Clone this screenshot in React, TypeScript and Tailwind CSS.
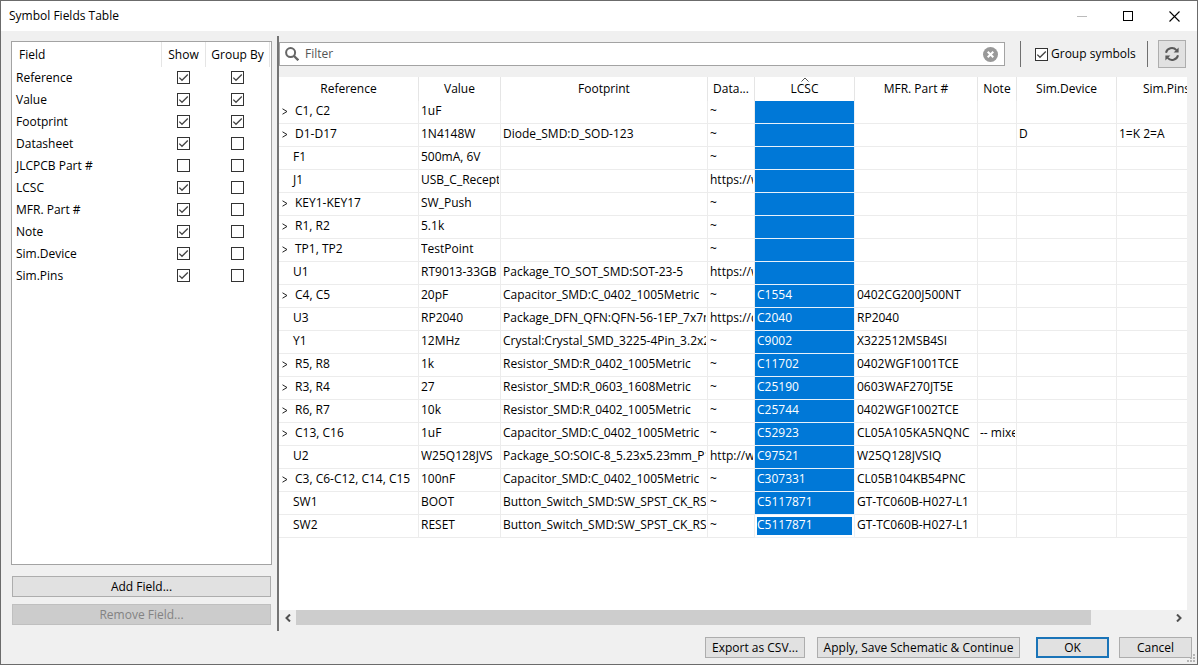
import { useState } from "react";

type Field = { name: string; show: boolean; group: boolean };

const initialFields: Field[] = [
  { name: "Reference", show: true, group: true },
  { name: "Value", show: true, group: true },
  { name: "Footprint", show: true, group: true },
  { name: "Datasheet", show: true, group: false },
  { name: "JLCPCB Part #", show: false, group: false },
  { name: "LCSC", show: true, group: false },
  { name: "MFR. Part #", show: true, group: false },
  { name: "Note", show: true, group: false },
  { name: "Sim.Device", show: true, group: false },
  { name: "Sim.Pins", show: true, group: false },
];

// Reference, Value, Footprint, Datasheet, LCSC, MFR. Part #, Note, Sim.Device, Sim.Pins
const rows: string[][] = [
  ["C1, C2", "1uF", "", "~", "", "", "", "", ""],
  ["D1-D17", "1N4148W", "Diode_SMD:D_SOD-123", "~", "", "", "", "D", "1=K 2=A"],
  ["F1", "500mA, 6V", "", "~", "", "", "", "", ""],
  ["J1", "USB_C_Recepta", "", "https://w", "", "", "", "", ""],
  ["KEY1-KEY17", "SW_Push", "", "~", "", "", "", "", ""],
  ["R1, R2", "5.1k", "", "~", "", "", "", "", ""],
  ["TP1, TP2", "TestPoint", "", "~", "", "", "", "", ""],
  ["U1", "RT9013-33GB", "Package_TO_SOT_SMD:SOT-23-5", "https://w", "", "", "", "", ""],
  ["C4, C5", "20pF", "Capacitor_SMD:C_0402_1005Metric", "~", "C1554", "0402CG200J500NT", "", "", ""],
  ["U3", "RP2040", "Package_DFN_QFN:QFN-56-1EP_7x7m", "https://d", "C2040", "RP2040", "", "", ""],
  ["Y1", "12MHz", "Crystal:Crystal_SMD_3225-4Pin_3.2x2.5", "~", "C9002", "X322512MSB4SI", "", "", ""],
  ["R5, R8", "1k", "Resistor_SMD:R_0402_1005Metric", "~", "C11702", "0402WGF1001TCE", "", "", ""],
  ["R3, R4", "27", "Resistor_SMD:R_0603_1608Metric", "~", "C25190", "0603WAF270JT5E", "", "", ""],
  ["R6, R7", "10k", "Resistor_SMD:R_0402_1005Metric", "~", "C25744", "0402WGF1002TCE", "", "", ""],
  ["C13, C16", "1uF", "Capacitor_SMD:C_0402_1005Metric", "~", "C52923", "CL05A105KA5NQNC", "-- mixe", "", ""],
  ["U2", "W25Q128JVS", "Package_SO:SOIC-8_5.23x5.23mm_P1.2", "http://w", "C97521", "W25Q128JVSIQ", "", "", ""],
  ["C3, C6-C12, C14, C15", "100nF", "Capacitor_SMD:C_0402_1005Metric", "~", "C307331", "CL05B104KB54PNC", "", "", ""],
  ["SW1", "BOOT", "Button_Switch_SMD:SW_SPST_CK_RS28", "~", "C5117871", "GT-TC060B-H027-L1", "", "", ""],
  ["SW2", "RESET", "Button_Switch_SMD:SW_SPST_CK_RS28", "~", "C5117871", "GT-TC060B-H027-L1", "", "", ""],
];

const headers = ["Reference", "Value", "Footprint", "Data...", "LCSC", "MFR. Part #", "Note", "Sim.Device", "Sim.Pins"];
const LCSC = 4;

function CheckBox({ checked, onChange, label, id }: { checked: boolean; onChange: () => void; label?: string; id?: string }) {
  return (
    <span className="inline-grid size-[13px] shrink-0">
      <input
        id={id}
        type="checkbox"
        aria-label={label}
        checked={checked}
        onChange={onChange}
        className="col-start-1 row-start-1 size-[13px] appearance-none border border-[#333] bg-white"
      />
      {checked && (
        <svg viewBox="0 0 13 13" className="pointer-events-none col-start-1 row-start-1 size-[13px]" fill="none" stroke="#444" strokeWidth="1.3">
          <path d="M2.3 6.6 5 9.3 10.8 3.5" />
        </svg>
      )}
    </span>
  );
}

function TitleBar() {
  return (
    <header className="flex h-[30px] shrink-0 items-center bg-white pl-2">
      <h1 className="flex-1">Symbol Fields Table</h1>
      <button aria-label="Minimize" disabled className="flex h-full w-[46px] items-center justify-center">
        <svg width="11" height="11" stroke="#bbb"><path d="M0 5.5H10" /></svg>
      </button>
      <button aria-label="Maximize" className="flex h-full w-[46px] items-center justify-center">
        <svg width="11" height="11" fill="none" stroke="#000"><rect x="0.5" y="0.5" width="9" height="9" /></svg>
      </button>
      <button aria-label="Close" className="flex h-full w-[46px] items-center justify-center">
        <svg width="11" height="11" stroke="#000" strokeWidth="1.1"><path d="M0.5 0.5 10.5 10.5M10.5 0.5 0.5 10.5" /></svg>
      </button>
    </header>
  );
}

function FieldList() {
  const [fields, setFields] = useState(initialFields);
  const toggle = (i: number, key: "show" | "group") =>
    setFields(fields.map((f, j) => (j === i ? { ...f, [key]: !f[key] } : f)));
  return (
    <aside className="flex w-[261px] shrink-0 flex-col pt-[5px] pb-1.5">
      <div className="flex-1 border border-[#a3a3a3] bg-white">
        <table className="w-full table-fixed border-separate border-spacing-0">
          <colgroup>
            <col />
            <col className="w-[44px]" />
            <col className="w-[64px]" />
            <col className="w-px" />
          </colgroup>
          <thead>
            <tr className="h-[25px]">
              <th className="border-r border-[#e5e5e5] p-0 pl-[7px] text-left font-normal">Field</th>
              <th className="border-r border-[#e5e5e5] p-0 font-normal">Show</th>
              <th className="border-r border-[#e5e5e5] p-0 font-normal whitespace-nowrap">Group By</th>
              <td className="p-0" />
            </tr>
          </thead>
          <tbody>
            {fields.map((f, i) => (
              <tr key={f.name} className="h-[22px]">
                <td className="p-0 pl-1">{f.name}</td>
                <td className="p-0">
                  <span className="flex justify-center pr-0.5 pb-0.5">
                    <CheckBox checked={f.show} onChange={() => toggle(i, "show")} label={`Show ${f.name}`} />
                  </span>
                </td>
                <td className="p-0">
                  <span className="flex justify-center pr-0.5 pb-0.5">
                    <CheckBox checked={f.group} onChange={() => toggle(i, "group")} label={`Group by ${f.name}`} />
                  </span>
                </td>
                <td className="p-0" />
              </tr>
            ))}
          </tbody>
        </table>
      </div>
      <div className="mt-[11px] flex flex-col gap-[7px] px-px">
        <button className="h-[21px] border border-[#adadad] bg-[#e1e1e1]">Add Field...</button>
        <button disabled className="h-[21px] border border-[#bfbfbf] bg-[#cccccc] text-[#838383]">Remove Field...</button>
      </div>
    </aside>
  );
}

function Toolbar() {
  const [text, setText] = useState("");
  const [group, setGroup] = useState(true);
  return (
    <div className="mt-1 mr-px flex h-7 shrink-0 items-center">
      <div className="flex h-6 flex-1 items-center border border-[#a3a3a3] bg-white pr-1.5 pl-[5px]">
        <svg width="14" height="14" viewBox="0 0 14 14" fill="none" stroke="#666" strokeWidth="2">
          <circle cx="5.6" cy="5.6" r="4.5" />
          <path d="M9 9 13.3 13.3" strokeWidth="2.3" />
        </svg>
        <input
          aria-label="Filter"
          placeholder="Filter"
          value={text}
          onChange={(e) => setText(e.target.value)}
          className="ml-1.5 h-[22px] min-w-0 flex-1 pb-0.5 outline-none placeholder:text-[#555]"
        />
        <button aria-label="Clear filter" onClick={() => setText("")}>
          <svg width="15" height="15" viewBox="0 0 15 15">
            <circle cx="7.5" cy="7.5" r="7.5" fill="#999" />
            <path d="M4.7 4.7 10.3 10.3M10.3 4.7 4.7 10.3" stroke="#fff" strokeWidth="2" />
          </svg>
        </button>
      </div>
      <div className="ml-[15px] h-[26px] w-px bg-[#707070]" />
      <div className="ml-3.5 flex items-center gap-[3px]">
        <CheckBox id="group-symbols" checked={group} onChange={() => setGroup(!group)} />
        <label htmlFor="group-symbols" className="w-[81px] whitespace-nowrap">Group symbols</label>
      </div>
      <div className="ml-[15px] h-[26px] w-px bg-[#707070]" />
      <button aria-label="Refresh" className="ml-2.5 flex size-7 items-center justify-center border border-[#adadad] bg-[#e1e1e1]">
        <svg width="16" height="16" viewBox="0 0 16 16" fill="none" stroke="#5a5a5a" strokeWidth="2">
          <path d="M2 6.8A6 6 0 0 1 12.4 4.2" />
          <path d="M14 9.2A6 6 0 0 1 3.6 11.8" />
          <path d="M14.6 1.6V6.6H9.6Z" fill="#5a5a5a" stroke="none" />
          <path d="M1.4 14.4V9.4H6.4Z" fill="#5a5a5a" stroke="none" />
        </svg>
      </button>
    </div>
  );
}

function cellClass(col: number) {
  return col === LCSC
    ? "border-r border-b border-[#e8f1fa] bg-[#0078d7] bg-clip-padding p-0 text-white"
    : "border-r border-b border-[#ececec] p-0";
}

function SymbolTable() {
  return (
    <div className="min-h-0 flex-1 overflow-hidden bg-white">
      <table className="w-[938px] table-fixed border-separate border-spacing-0">
        <colgroup>
          <col className="w-[140px]" />
          <col className="w-[82px]" />
          <col className="w-[207px]" />
          <col className="w-[47px]" />
          <col className="w-[100px]" />
          <col className="w-[123px]" />
          <col className="w-[39px]" />
          <col className="w-[100px]" />
          <col className="w-[100px]" />
        </colgroup>
        <thead>
          <tr className="h-6">
            {headers.map((h, i) => (
              <th key={h} className="relative border-r border-[#e5e5e5] p-0 font-normal whitespace-nowrap">
                {i === LCSC && (
                  <svg className="absolute top-0 left-[46px]" width="8" height="5" fill="none" stroke="#555">
                    <path d="M0.5 4.5 4 1 7.5 4.5" />
                  </svg>
                )}
                {h}
              </th>
            ))}
          </tr>
        </thead>
        <tbody>
          {rows.map((row, r) => (
            <tr key={row[0]} className="h-[23px]">
              {row.map((text, c) => (
                <td key={c} className={cellClass(c)}>
                  {c === 0 ? (
                    row[0].includes(",") || row[0].includes("-") ? (
                      <div className="flex h-[22px] items-center gap-[7px] pb-0.5 pl-[3px] whitespace-nowrap">
                        <button aria-label={`Expand ${text}`} className="w-1.5">
                          <svg width="6" height="7" fill="none" stroke="#222"><path d="M0.5 0.8 5 3.5 0.5 6.2" /></svg>
                        </button>
                        {text}
                      </div>
                    ) : (
                      <div className="flex h-[22px] items-center pb-0.5 pl-3.5">{text}</div>
                    )
                  ) : r === rows.length - 1 && c === LCSC ? (
                    <div className="flex h-[22px] items-center border-2 border-white pb-0.5">{text}</div>
                  ) : (
                    <div className="mr-px ml-0.5 h-[22px] overflow-hidden leading-5 whitespace-nowrap">{text}</div>
                  )}
                </td>
              ))}
            </tr>
          ))}
        </tbody>
      </table>
    </div>
  );
}

function ScrollBar() {
  return (
    <div className="flex h-[15px] shrink-0">
      <button aria-label="Scroll left" className="flex w-[17px] items-center justify-center">
        <svg width="6" height="8" fill="none" stroke="#505050" strokeWidth="2"><path d="M5 0.5 1.5 4 5 7.5" /></svg>
      </button>
      <div className="flex-1">
        <div className="h-full w-[91%] bg-[#cdcdcd]" />
      </div>
      <button aria-label="Scroll right" className="flex w-[17px] items-center justify-center">
        <svg width="6" height="8" fill="none" stroke="#505050" strokeWidth="2"><path d="M1 0.5 4.5 4 1 7.5" /></svg>
      </button>
    </div>
  );
}

function Footer() {
  return (
    <footer className="relative flex shrink-0 justify-end py-1.5 pr-[5px]">
      <button className="mr-3 h-[21px] w-[100px] border border-[#adadad] bg-[#e1e1e1] whitespace-nowrap">Export as CSV...</button>
      <button className="mr-4 h-[21px] w-[203px] border border-[#adadad] bg-[#e1e1e1] whitespace-nowrap">
        Apply, Save Schematic &amp; Continue
      </button>
      <button className="mr-2.5 h-[21px] w-[73px] border-2 border-[#1a74b8] bg-[#e1e1e1]">OK</button>
      <button className="h-[21px] w-[73px] border border-[#adadad] bg-[#e1e1e1]">Cancel</button>
      <svg className="absolute right-0.5 bottom-0.5" width="8" height="8" fill="#b5b5b5">
        <path d="M6 0h2v2H6zM3 3h2v2H3zM6 3h2v2H6zM0 6h2v2H0zM3 6h2v2H3zM6 6h2v2H6z" />
      </svg>
    </footer>
  );
}

export default function App() {
  return (
    <div className="flex min-h-screen flex-col border border-[#6b6b6b] bg-[#f0f0f0] font-['Open_Sans','Noto_Sans',sans-serif] text-[12px] leading-4 text-black">
      <TitleBar />
      <main className="flex flex-1 pt-[5px] pr-2.5 pl-2.5">
        <FieldList />
        <div className="ml-[5px] w-0.5 shrink-0 bg-[#747474]" />
        <section className="flex min-w-0 flex-1 flex-col pb-1.5">
          <Toolbar />
          <div className="h-[9px] shrink-0" />
          <SymbolTable />
          <ScrollBar />
        </section>
      </main>
      <Footer />
    </div>
  );
}
